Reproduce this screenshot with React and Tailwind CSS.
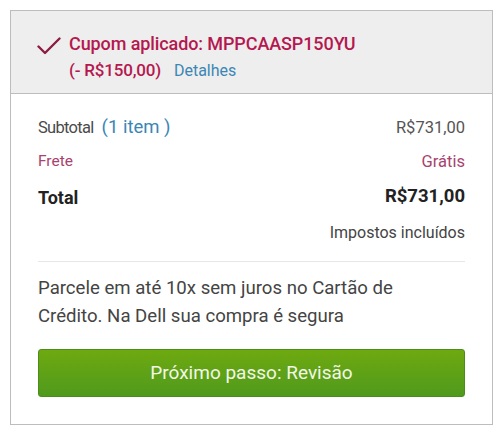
import React from "react";

const CheckIcon = () => (
  <svg width="24" height="18" viewBox="0 0 24 18" fill="none">
    <path d="M1.5 9.5 L8 16 L22.5 1.5" stroke="#8e1c44" strokeWidth="2.4" strokeLinecap="round" strokeLinejoin="round" />
  </svg>
);

const App = () => {
  return (
    <div className="w-[500px] h-[435px] bg-white pt-[10px] px-[10px] font-['Roboto',sans-serif]">
      <div className="w-[483px] h-[415px] border border-[#bdbdbd] flex flex-col">
        <div className="bg-[#eeeeee] h-[83px] border-b border-[#bdbdbd] pl-[26px] pt-[20px] flex items-start gap-[8px]">
          <div className="pt-[6px]">
            <CheckIcon />
          </div>
          <div className="flex flex-col">
            <span className="text-[18px] leading-[26px] font-medium text-[#b5174f] tracking-[-0.1px]">
              Cupom aplicado: MPPCAASP150YU
            </span>
            <span className="leading-[26px] flex items-baseline">
              <span className="text-[17px] font-medium text-[#b5174f] tracking-[-0.2px]">(- R$150,00)</span>
              <span className="text-[16px] text-[#3b86b5] ml-[13px]">Detalhes</span>
            </span>
          </div>
        </div>

        <div className="px-[27px] pt-[17px] flex flex-col">
          <div className="flex items-center justify-between h-[34px]">
            <span className="flex items-baseline">
              <span className="text-[16.5px] text-[#4a4a4a] tracking-[-0.7px]">Subtotal</span>
              <span className="ml-[8px] text-[18.5px] text-[#3b86b5]">(1 item )</span>
            </span>
            <span className="text-[16.5px] text-[#555]">R$731,00</span>
          </div>
          <div className="flex items-center justify-between h-[34px]">
            <span className="text-[15.5px] text-[#a8426e]">Frete</span>
            <span className="text-[16.5px] text-[#a8426e]">Grátis</span>
          </div>
          <div className="flex items-center justify-between h-[36px]">
            <span className="text-[18px] font-bold text-[#222]">Total</span>
            <span className="text-[18.5px] font-bold text-[#222]">R$731,00</span>
          </div>
          <div className="flex items-center justify-end h-[36px]">
            <span className="text-[16px] text-[#444]">Impostos incluídos</span>
          </div>
          <div className="border-t border-[#e6e6e6] mt-[10px]" />
          <p className="text-[18.6px] leading-[28px] text-[#444] pt-[12px] pr-[24px]">
            Parcele em até 10x sem juros no Cartão de Crédito. Na Dell sua compra é segura
          </p>
          <button className="mt-[19px] h-[48px] w-full rounded-[3px] bg-gradient-to-b from-[#6ea90f] to-[#4f9a1c] border border-[#4a8d18] text-[19px] text-[#f2f7e6]">
            Próximo passo: Revisão
          </button>
        </div>
      </div>
    </div>
  );
};

export default App;
